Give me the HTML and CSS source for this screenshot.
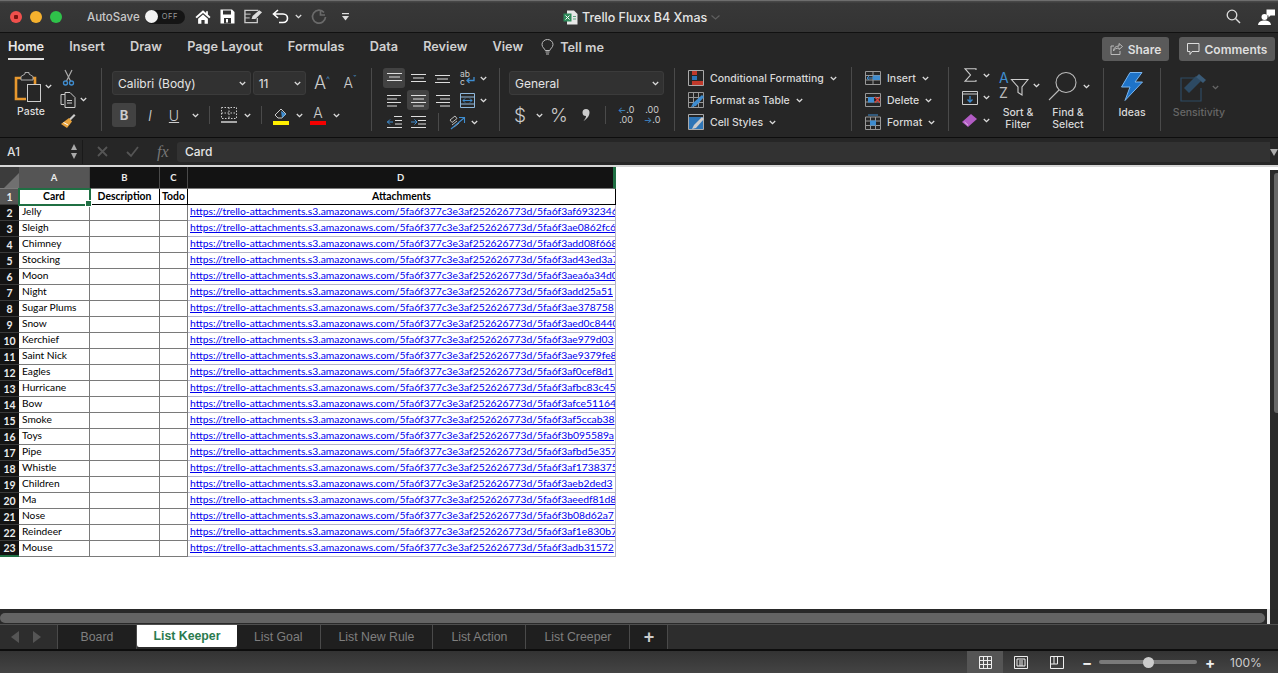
FILE: index.html
```html
<!DOCTYPE html>
<html lang="en">
<head>
    <meta charset="UTF-8">
    <title>Trello Fluxx B4 Xmas</title>
    <link rel="stylesheet" href="styles.css">
</head>
<body>
    <svg class="defs"><symbol id="chev" viewBox="0 0 7 5"><path d="M.8 1l2.7 2.7L6.2 1" fill="none" stroke="currentColor" stroke-width="1.3"/></symbol></svg>

    <header class="titlebar">
        <div class="lights">
            <span class="light red"></span>
            <span class="light yellow"></span>
            <span class="light green"></span>
        </div>
        <span class="autosave">AutoSave</span>
        <span class="toggle"><span class="knob"></span>OFF</span>
        <div class="quick">
            <svg width="16" height="16" viewBox="0 0 18 17"><path d="M9 1 .5 8.5 2 10l7-6 7 6 1.500-1.500-3-2.700V2h-2v2z" fill="#fff"/><path d="M3.500 10.500 9 5.600l5.500 4.900V16h-3.700v-4H7.200v4H3.500z" fill="#fff"/></svg>
            <svg width="15" height="15" viewBox="0 0 15 15"><path d="M.5.500H12L14.500 3v11.500H.5z" fill="#fff"/><rect x="3" y="1.500" width="8" height="4" fill="#333"/><rect x="4" y="9" width="7" height="5.500" fill="#333"/><rect x="6" y="10" width="2" height="3.500" fill="#fff"/></svg>
            <svg width="19" height="15" viewBox="0 0 20 15"><path d="M15 1H1v13h13V9" fill="none" stroke="#ccc" stroke-width="1.400"/><path d="M1 5h6M1 9h5" stroke="#ccc"/><path d="M8 10l1-3 7-6 3 2-7 7z" fill="#ddd"/></svg>
            <svg width="17" height="15" viewBox="0 0 17 15"><path d="M6 1 1.500 5 6 9M2 5h9c6 0 6 8.500 0 8.500H7" fill="none" stroke="#fff" stroke-width="1.600"/></svg>
            <svg class="chev"><use href="#chev"/></svg>
            <svg class="redo" width="16" height="16" viewBox="0 0 16 16"><path d="M13 3.500A6.500 6.500 0 1 0 14.500 8M9.500 1v5H14" fill="none" stroke="#6a6a6a" stroke-width="1.700"/></svg>
            <svg class="more" width="7" height="8" viewBox="0 0 7 8"><rect width="7" height="1.200" fill="#ddd"/><path d="M0 3h7L3.500 7.500z" fill="#ddd"/></svg>
        </div>
        <div class="doc-title">
            <svg width="15" height="15" viewBox="0 0 15 15"><path d="M4 .5h7L14.500 4v10.500H4z" fill="#e8e8e8"/><rect x=".5" y="3.500" width="8" height="8" fill="#2f8a5b"/><path d="M2.500 5.500l4 4M6.500 5.500l-4 4" stroke="#fff"/><path d="M10 6.500h3M10 9h3" stroke="#5aa57f"/></svg>
            <span>Trello Fluxx B4 Xmas</span>
            <svg width="9" height="5" viewBox="0 0 9 5"><path d="M.5.500l4 3.500 4-3.500" fill="none" stroke="#5f5f5f" stroke-width="1.200"/></svg>
        </div>
        <div class="title-right">
            <svg width="15" height="15" viewBox="0 0 15 15"><circle cx="6" cy="6" r="4.800" fill="none" stroke="#ddd" stroke-width="1.300"/><path d="M9.500 9.500 14 14" stroke="#ddd" stroke-width="1.400"/></svg>
            <svg width="19" height="16" viewBox="0 0 18 16"><circle cx="7" cy="8" r="3" fill="#fff"/><path d="M.5 16c.5-3.500 3-4.500 6.500-4.500s6 1 6.500 4.500z" fill="#fff"/><path d="M9 .5h8.500v6H13l-2 2v-2H9z" fill="#fff"/></svg>
        </div>
    </header>

    <nav class="tabs">
        <a class="tab active">Home</a>
        <a class="tab">Insert</a>
        <a class="tab">Draw</a>
        <a class="tab">Page Layout</a>
        <a class="tab">Formulas</a>
        <a class="tab">Data</a>
        <a class="tab">Review</a>
        <a class="tab">View</a>
        <span class="tellme">
            <svg width="13" height="16" viewBox="0 0 13 16"><path d="M4.200 11.500C3.800 9.500 1 8.500 1 5.500a5.500 5 0 0 1 11 0c0 3-2.800 4-3.200 6z" fill="none" stroke="#bbb"/><path d="M4.500 13h4M5 15h3" stroke="#bbb"/></svg>
            Tell me
        </span>
        <div class="tab-buttons">
            <button class="top-btn share">
                <svg width="13" height="12" viewBox="0 0 13 12"><path d="M9 .5l3.500 3L9 6.500V5C6 5 4.500 6 3.500 8c0-3 2-5 5.500-5z" fill="none" stroke="#bbb"/><path d="M4 3H1v8.500h9V8" fill="none" stroke="#bbb"/></svg>
                Share
            </button>
            <button class="top-btn comments">
                <svg width="13" height="12" viewBox="0 0 13 12"><path d="M.5.500H12v8H5l-2 3v-3H.5z" fill="none" stroke="#ddd"/></svg>
                Comments
            </button>
        </div>
    </nav>

    <section class="ribbon">
        <div class="group clipboard">
            <div class="paste">
                <svg width="28" height="30" viewBox="0 0 28 30"><path d="M12 27H2V6h19v6" fill="none" stroke="#e8982e" stroke-width="2.600"/><path d="M7 8V4.500L11 2V.5h4V2l4 2.500V8z" fill="#262626" stroke="#aaa"/><rect x="13.500" y="12.500" width="13" height="17" fill="#262626" stroke="#ccc"/></svg>
                <svg class="chev paste-chev"><use href="#chev"/></svg>
                <span class="paste-label">Paste</span>
            </div>
            <div class="clip-tools">
                <svg class="scissors" width="11" height="16" viewBox="0 0 11 16"><path d="M2 0l5.500 11M9 0 3.500 11" stroke="#aaa" stroke-width="1.200"/><circle cx="2.500" cy="13" r="2" fill="none" stroke="#3f8dd0" stroke-width="1.300"/><circle cx="8.500" cy="13" r="2" fill="none" stroke="#3f8dd0" stroke-width="1.300"/></svg>
                <span class="row-icon">
                    <svg width="16" height="16" viewBox="0 0 16 16"><path d="M5 2.500H1v10h3" fill="none" stroke="#ccc"/><path d="M5 .5h5l5 5v10H5z" fill="#262626" stroke="#ccc"/><path d="M7 8.500h5M7 11h5" stroke="#ccc"/></svg>
                    <svg class="chev"><use href="#chev"/></svg>
                </span>
                <svg width="16" height="16" viewBox="0 0 16 16"><path d="M9 6l5-5 1.500 1.500-5 5z" fill="#ccc"/><path d="M9 5l3 3.500-5 6.500-6-4z" fill="#e8a33d"/><path d="M3.500 9.500 8 12" stroke="#fff"/></svg>
            </div>
        </div>

        <div class="group font">
            <div class="font-row">
                <div class="select font-name">Calibri (Body)<svg class="chev"><use href="#chev"/></svg></div>
                <div class="select font-size">11<svg class="chev"><use href="#chev"/></svg></div>
                <span class="grow-a big">A<sup>^</sup></span>
                <span class="grow-a small">A<sup>ˇ</sup></span>
            </div>
            <div class="font-row tools">
                <span class="fmt bold">B</span>
                <span class="fmt italic">I</span>
                <span class="fmt under">U</span>
                <svg class="chev"><use href="#chev"/></svg>
                <i class="vline"></i>
                <svg width="16" height="16" viewBox="0 0 16 16"><path d="M.5.500h15v11H.5zM8 .5v11M.5 6h15" fill="none" stroke="#ccc" stroke-dasharray="1.500 1.500"/><path d="M0 15h16" stroke="#fff" stroke-width="1.200"/></svg>
                <svg class="chev border-chev"><use href="#chev"/></svg>
                <i class="vline"></i>
                <span class="colour-btn">
                    <svg width="16" height="12" viewBox="0 0 16 12"><path d="M2 7l6-6 5 5-4 4H5z" fill="none" stroke="#ccc"/><path d="M8 3l5 3-4 4z" fill="#3f8dd0"/></svg>
                    <i class="swatch yellow-bar"></i>
                </span>
                <svg class="chev"><use href="#chev"/></svg>
                <span class="colour-btn font-a">
                    A
                    <i class="swatch red-bar"></i>
                </span>
                <svg class="chev"><use href="#chev"/></svg>
            </div>
        </div>

        <div class="group align">
            <div class="align-grid">
                <span class="al on"><svg width="15" height="10" viewBox="0 0 15 10"><path d="M0 .5h15M2 4h11M0 7.500h15" stroke="#ddd"/></svg></span>
                <span class="al"><svg width="15" height="10" viewBox="0 0 15 10"><path d="M0 1.500h15M2 5h11M0 8.500h15" stroke="#ddd"/></svg></span>
                <span class="al"><svg width="15" height="10" viewBox="0 0 15 10"><path d="M0 2.500h15M2 6h11M0 9.500h15" stroke="#ddd"/></svg></span>
                <span class="al wrap-ic"><svg width="15" height="16" viewBox="0 0 15 16"><text x="0" y="7" class="ab">ab</text><text x="0" y="15" class="ab">c</text><path d="M14 7v3.500H7M9.500 8 7 10.500 9.500 13" fill="none" stroke="#3f8dd0" stroke-width="1.300"/></svg><svg class="chev"><use href="#chev"/></svg></span>
                <span class="al"><svg width="15" height="13" viewBox="0 0 15 13"><path d="M0 1.500h14M0 5h10M0 8.500h14M0 12h10" stroke="#ddd"/></svg></span>
                <span class="al on"><svg width="15" height="13" viewBox="0 0 15 13"><path d="M0 1.500h15M2 5h11M0 8.500h15M2 12h11" stroke="#ddd"/></svg></span>
                <span class="al"><svg width="15" height="13" viewBox="0 0 15 13"><path d="M1 1.500h14M5 5h10M1 8.500h14M5 12h10" stroke="#ddd"/></svg></span>
                <span class="al wrap-ic"><svg width="15" height="15" viewBox="0 0 15 15"><path d="M.5.500h14v14H.5zM.5 4h14M.5 11h14" fill="none" stroke="#8fb8dc"/><path d="M3 7.500h9M5 5.500l-2 2 2 2M10 5.500l2 2-2 2" fill="none" stroke="#3f8dd0"/></svg><svg class="chev"><use href="#chev"/></svg></span>
                <span class="al"><svg width="15" height="12" viewBox="0 0 15 12"><path d="M7 .5h8M8 4.500h7M8 8h7M0 11.500h15" stroke="#ddd"/><path d="M6 6H0M3 3.500.5 6 3 8.500" fill="none" stroke="#3f8dd0"/></svg></span>
                <span class="al"><svg width="15" height="12" viewBox="0 0 15 12"><path d="M0 .5h15M7 4.500h8M7 8h8M0 11.500h15" stroke="#ddd"/><path d="M0 6h6M3.500 3.500 6 6 3.500 8.500" fill="none" stroke="#3f8dd0"/></svg></span>
                <span class="al orient">
                    <i class="vline"></i>
                    <svg class="orient-ic" width="16" height="16" viewBox="0 0 16 16"><path d="M1 6l5-4 2 2.500-5 4zM3 11l5-4M5 13l5-4" fill="none" stroke="#ccc" stroke-width=".9"/><path d="M2 15 15 4M10 3.500h5.500V9" fill="none" stroke="#3f8dd0" stroke-width="1.100"/></svg>
                    <svg class="chev"><use href="#chev"/></svg>
                </span>
            </div>
        </div>

        <div class="group number">
            <div class="select general">General<svg class="chev"><use href="#chev"/></svg></div>
            <div class="number-tools">
                <span class="num-sym">$</span>
                <svg class="chev"><use href="#chev"/></svg>
                <span class="num-sym pct">%</span>
                <svg class="comma" width="8" height="12" viewBox="0 0 8 12"><path d="M4 0a3.500 3.500 0 0 1 3.500 3.500C7.500 7 5 10 1.500 12 3.300 10 4 8.500 4 7A3.500 3.500 0 0 1 4 0z" fill="#ccc"/></svg>
                <i class="vline"></i>
                <span class="dec first-dec"><b>←</b>.0<br>.00</span>
                <span class="dec">.00<br><b>→</b>.0</span>
            </div>
        </div>

        <div class="group styles">
            <div class="style-row">
                <svg width="16" height="16" viewBox="0 0 16 16"><path d="M.5.500h15v15H.5z" fill="none" stroke="#aaa"/><rect x="4" y="1" width="5" height="4" fill="#c0392b"/><rect x="4" y="6" width="5" height="4" fill="#2e75b6"/><rect x="4" y="11" width="11" height="4" fill="#c0392b"/></svg>
                Conditional Formatting
                <svg class="chev"><use href="#chev"/></svg>
            </div>
            <div class="style-row">
                <svg width="16" height="16" viewBox="0 0 16 16"><path d="M.5.500h15v15H.5zM.5 5.500h15M.5 10.500h15M5.500.5v15M10.500.5v15" fill="none" stroke="#999"/><path d="M3 15l2-4 9-8 2 2-8 9z" fill="#3f8dd0"/></svg>
                Format as Table
                <svg class="chev"><use href="#chev"/></svg>
            </div>
            <div class="style-row">
                <svg width="16" height="16" viewBox="0 0 16 16"><path d="M.5.500h15v15H.5z" fill="none" stroke="#aaa"/><rect x="1" y="3" width="14" height="12" fill="#2e75b6"/><path d="M4 15l2-4 8-8 2 2-8 9z" fill="#ccc"/></svg>
                Cell Styles
                <svg class="chev"><use href="#chev"/></svg>
            </div>
        </div>

        <div class="group cells">
            <div class="style-row">
                <svg width="16" height="16" viewBox="0 0 16 16"><path d="M.5 1.500h15v13H.5zM.5 5.500h15M.5 10h15M8 1.500v13" fill="none" stroke="#999"/><rect x="8" y="5.500" width="7" height="4.500" fill="#3f8dd0"/><path d="M8 8H2M4 6 2 8l2 2" fill="none" stroke="#3f8dd0"/></svg>
                Insert
                <svg class="chev"><use href="#chev"/></svg>
            </div>
            <div class="style-row">
                <svg width="16" height="16" viewBox="0 0 16 16"><path d="M.5 1.500h15v13H.5zM.5 5.500h15M.5 10h15" fill="none" stroke="#999"/><rect x="3" y="5" width="6" height="5.500" fill="#3f8dd0"/><path d="M10 5l5 5.500M15 5l-5 5.500" stroke="#d9403a" stroke-width="1.300"/></svg>
                Delete
                <svg class="chev"><use href="#chev"/></svg>
            </div>
            <div class="style-row">
                <svg width="16" height="16" viewBox="0 0 16 16"><path d="M.5 3h15v12.500H.5zM.5 7h15M.5 11.500h15M5.500 3v12.500M10.500 3v12.500" fill="none" stroke="#999"/><rect x="5" y="6.500" width="6" height="5" fill="#3f8dd0"/><path d="M3 1h10" stroke="#3f8dd0"/></svg>
                Format
                <svg class="chev"><use href="#chev"/></svg>
            </div>
        </div>

        <div class="group editing">
            <div class="edit-col">
                <span class="row-icon sum"><svg width="13" height="14" viewBox="0 0 13 14"><path d="M12 2V.7H1L6.500 7 1 13.300h11V12" fill="none" stroke="#ccc" stroke-width="1.100"/></svg><svg class="chev"><use href="#chev"/></svg></span>
                <span class="row-icon"><svg width="16" height="14" viewBox="0 0 16 14"><path d="M.5.500h15v13H.5zM.5 3h15" fill="none" stroke="#ccc"/><path d="M8 5v6M5.500 8.500 8 11l2.500-2.500" fill="none" stroke="#3f8dd0" stroke-width="1.300"/></svg><svg class="chev"><use href="#chev"/></svg></span>
                <span class="row-icon"><svg width="16" height="15" viewBox="0 0 16 15"><path d="M0 9 9 1l6 5-9 8z" fill="#b25cc4"/><path d="M2.500 9 6 12.300" stroke="#e6c4ee"/></svg><svg class="chev"><use href="#chev"/></svg></span>
            </div>
            <div class="big-btn sort">
                <span class="row-icon">
                    <svg width="30" height="28" viewBox="0 0 30 28"><text x="0" y="12" class="az blue-t">A</text><text x="0" y="27" class="az">Z</text><path d="M12.500 8.500H29l-6 7.500v8l-4-2.500V16z" fill="none" stroke="#ccc" stroke-width="1.100"/></svg>
                    <svg class="chev"><use href="#chev"/></svg>
                </span>
                <span class="big-label">Sort &amp;<br>Filter</span>
            </div>
            <div class="big-btn find">
                <span class="row-icon">
                    <svg width="30" height="30" viewBox="0 0 30 30"><circle cx="18" cy="11.500" r="10" fill="none" stroke="#bbb" stroke-width="1.100"/><path d="M11 19 1 29" stroke="#bbb" stroke-width="1.100"/></svg>
                    <svg class="chev"><use href="#chev"/></svg>
                </span>
                <span class="big-label">Find &amp;<br>Select</span>
            </div>
        </div>

        <div class="group ideas">
            <svg width="22" height="29" viewBox="0 0 22 29"><path d="M9 .5h12L14 10h7.500L4 28.500 9 15H.5z" fill="#1e73c8" stroke="#7bb6ee"/></svg>
            <span class="big-label">Ideas</span>
        </div>

        <div class="group sensitivity">
            <div class="row-icon">
                <svg width="28" height="30" viewBox="0 0 28 30"><path d="M18 6H1v23h20V16" fill="none" stroke="#2d4a63" stroke-width="1.200"/><path d="M4 16 16 4l5 5L9 21z" fill="#2d4a63"/><path d="M19 2l7 6-3 3-7-6z" fill="#3a5a76"/></svg>
                <svg class="chev dim-chev"><use href="#chev"/></svg>
            </div>
            <span class="big-label dim">Sensitivity</span>
        </div>
    </section>

    <div class="formula-bar">
        <div class="name-box">
            <span>A1</span>
            <span class="spin"><i class="up"></i><i class="down"></i></span>
        </div>
        <div class="fx-tools">
            <svg width="11" height="11" viewBox="0 0 11 11"><path d="M1 1l9 9M10 1l-9 9" stroke="#555" stroke-width="1.800"/></svg>
            <svg width="13" height="11" viewBox="0 0 13 11"><path d="M1 6l4 4 7-9" fill="none" stroke="#555" stroke-width="1.800"/></svg>
            <span class="fx">fx</span>
        </div>
        <div class="formula-input">Card</div>
        <i class="bar-caret"></i>
    </div>

    <main class="sheet-wrap">
        <div class="sheet-area">
            <table class="sheet">
                <colgroup>
                    <col class="c-head"><col class="c-a"><col class="c-b"><col class="c-c"><col class="c-d">
                </colgroup>
                <thead>
                    <tr>
                        <th class="corner"><i></i></th>
                        <th class="col sel">A</th>
                        <th class="col">B</th>
                        <th class="col">C</th>
                        <th class="col last">D</th>
                    </tr>
                </thead>
                <tbody>
                    <tr><th class="rn sel">1</th><td class="hd active-cell">Card<i class="handle"></i></td><td class="hd">Description</td><td class="hd">Todo</td><td class="hd">Attachments</td></tr>
                    <tr><th class="rn">2</th><td>Jelly</td><td></td><td></td><td class="link"><a>https://trello-attachments.s3.amazonaws.com/5fa6f377c3e3af252626773d/5fa6f3af6932346</a></td></tr>
                    <tr><th class="rn">3</th><td>Sleigh</td><td></td><td></td><td class="link"><a>https://trello-attachments.s3.amazonaws.com/5fa6f377c3e3af252626773d/5fa6f3ae0862fc6</a></td></tr>
                    <tr><th class="rn">4</th><td>Chimney</td><td></td><td></td><td class="link"><a>https://trello-attachments.s3.amazonaws.com/5fa6f377c3e3af252626773d/5fa6f3add08f668</a></td></tr>
                    <tr><th class="rn">5</th><td>Stocking</td><td></td><td></td><td class="link"><a>https://trello-attachments.s3.amazonaws.com/5fa6f377c3e3af252626773d/5fa6f3ad43ed3a7</a></td></tr>
                    <tr><th class="rn">6</th><td>Moon</td><td></td><td></td><td class="link"><a>https://trello-attachments.s3.amazonaws.com/5fa6f377c3e3af252626773d/5fa6f3aea6a34d0</a></td></tr>
                    <tr><th class="rn">7</th><td>Night</td><td></td><td></td><td class="link"><a>https://trello-attachments.s3.amazonaws.com/5fa6f377c3e3af252626773d/5fa6f3add25a51</a></td></tr>
                    <tr><th class="rn">8</th><td>Sugar Plums</td><td></td><td></td><td class="link"><a>https://trello-attachments.s3.amazonaws.com/5fa6f377c3e3af252626773d/5fa6f3ae378758</a></td></tr>
                    <tr><th class="rn">9</th><td>Snow</td><td></td><td></td><td class="link"><a>https://trello-attachments.s3.amazonaws.com/5fa6f377c3e3af252626773d/5fa6f3aed0c8440</a></td></tr>
                    <tr><th class="rn">10</th><td>Kerchief</td><td></td><td></td><td class="link"><a>https://trello-attachments.s3.amazonaws.com/5fa6f377c3e3af252626773d/5fa6f3ae979d03</a></td></tr>
                    <tr><th class="rn">11</th><td>Saint Nick</td><td></td><td></td><td class="link"><a>https://trello-attachments.s3.amazonaws.com/5fa6f377c3e3af252626773d/5fa6f3ae9379fe8</a></td></tr>
                    <tr><th class="rn">12</th><td>Eagles</td><td></td><td></td><td class="link"><a>https://trello-attachments.s3.amazonaws.com/5fa6f377c3e3af252626773d/5fa6f3af0cef8d1</a></td></tr>
                    <tr><th class="rn">13</th><td>Hurricane</td><td></td><td></td><td class="link"><a>https://trello-attachments.s3.amazonaws.com/5fa6f377c3e3af252626773d/5fa6f3afbc83c45</a></td></tr>
                    <tr><th class="rn">14</th><td>Bow</td><td></td><td></td><td class="link"><a>https://trello-attachments.s3.amazonaws.com/5fa6f377c3e3af252626773d/5fa6f3afce51164</a></td></tr>
                    <tr><th class="rn">15</th><td>Smoke</td><td></td><td></td><td class="link"><a>https://trello-attachments.s3.amazonaws.com/5fa6f377c3e3af252626773d/5fa6f3af5ccab38</a></td></tr>
                    <tr><th class="rn">16</th><td>Toys</td><td></td><td></td><td class="link"><a>https://trello-attachments.s3.amazonaws.com/5fa6f377c3e3af252626773d/5fa6f3b095589a</a></td></tr>
                    <tr><th class="rn">17</th><td>Pipe</td><td></td><td></td><td class="link"><a>https://trello-attachments.s3.amazonaws.com/5fa6f377c3e3af252626773d/5fa6f3afbd5e357</a></td></tr>
                    <tr><th class="rn">18</th><td>Whistle</td><td></td><td></td><td class="link"><a>https://trello-attachments.s3.amazonaws.com/5fa6f377c3e3af252626773d/5fa6f3af1738375</a></td></tr>
                    <tr><th class="rn">19</th><td>Children</td><td></td><td></td><td class="link"><a>https://trello-attachments.s3.amazonaws.com/5fa6f377c3e3af252626773d/5fa6f3aeb2ded3</a></td></tr>
                    <tr><th class="rn">20</th><td>Ma</td><td></td><td></td><td class="link"><a>https://trello-attachments.s3.amazonaws.com/5fa6f377c3e3af252626773d/5fa6f3aeedf81d8</a></td></tr>
                    <tr><th class="rn">21</th><td>Nose</td><td></td><td></td><td class="link"><a>https://trello-attachments.s3.amazonaws.com/5fa6f377c3e3af252626773d/5fa6f3b08d62a7</a></td></tr>
                    <tr><th class="rn">22</th><td>Reindeer</td><td></td><td></td><td class="link"><a>https://trello-attachments.s3.amazonaws.com/5fa6f377c3e3af252626773d/5fa6f3af1e830b7</a></td></tr>
                    <tr><th class="rn lastrow">23</th><td>Mouse</td><td></td><td></td><td class="link"><a>https://trello-attachments.s3.amazonaws.com/5fa6f377c3e3af252626773d/5fa6f3adb31572</a></td></tr>
                </tbody>
            </table>
        </div>
        <div class="vscroll"><i></i></div>
    </main>

    <div class="hscroll"><i></i></div>

    <div class="sheet-tabs">
        <div class="tab-arrows"><i class="left"></i><i class="right"></i></div>
        <span class="stab board">Board</span>
        <span class="stab current">List Keeper</span>
        <span class="stab goal">List Goal</span>
        <span class="stab">List New Rule</span>
        <span class="stab">List Action</span>
        <span class="stab">List Creeper</span>
        <span class="stab plus">+</span>
    </div>

    <footer class="statusbar">
        <span class="view on"><svg width="13" height="13" viewBox="0 0 13 13"><path d="M.5.500h12v12H.5zM.5 4.500h12M.5 8.500h12M4.500.5v12M8.500.5v12" fill="none" stroke="#eee"/></svg></span>
        <span class="view"><svg width="14" height="13" viewBox="0 0 14 13"><path d="M.5.500h13v12H.5z" fill="none" stroke="#eee"/><path d="M3 3h8v7H3zM5 5h4M5 7h4M5 9h4" fill="none" stroke="#eee"/></svg></span>
        <span class="view"><svg width="14" height="13" viewBox="0 0 14 13"><path d="M.5.500h13v12H.5zM.5 8h7V.5M4 .5V8" fill="none" stroke="#eee"/></svg></span>
        <span class="zoom-btn minus">−</span>
        <span class="slider"><i></i></span>
        <span class="zoom-btn">+</span>
        <span class="pct-label">100%</span>
    </footer>
</body>
</html>
```

FILE: styles.css
```css
* {
    box-sizing: border-box;
}

body {
    margin: 0;
    width: 1278px;
    height: 673px;
    overflow: hidden;
    background-color: #262626;
    color: #e0e0e0;
    font-family: 'Inter', 'Roboto', sans-serif;
    font-size: 11px;
    display: flex;
    flex-direction: column;
}

svg {
    display: block;
    flex: none;
    overflow: visible;
}

i {
    font-style: normal;
}

.defs {
    display: none;
}

.chev {
    width: 7px;
    height: 5px;
    color: #ddd;
}

.vline {
    display: block;
    width: 1px;
    height: 18px;
    background-color: #4a4a4a;
    flex: none;
}

.row-icon {
    display: flex;
    align-items: center;
    gap: 4px;
}

/* title bar */
.titlebar {
    height: 33px;
    flex: none;
    display: flex;
    align-items: center;
    background: linear-gradient(#4b4b4b, #383838 8%, #333333);
    border-top: 1px solid #6d6d6d;
    border-bottom: 1px solid #111;
    padding: 0 2px 0 10px;
    position: relative;
}

.lights {
    display: flex;
    gap: 8px;
    width: 77px;
}

.light {
    width: 12px;
    height: 12px;
    border-radius: 50%;
}

.light.red {
    background: radial-gradient(circle, #7a1410 0 2px, #f0504c 2.5px);
}

.light.yellow {
    background-color: #f5b12e;
}

.light.green {
    background-color: #2fc24a;
}

.autosave {
    color: #c8c8c8;
    font-size: 11.5px;
    font-weight: 500;
}

.toggle {
    display: flex;
    align-items: center;
    gap: 4px;
    width: 40px;
    height: 14px;
    margin-left: 5px;
    border-radius: 7px;
    background-color: #151515;
    color: #999;
    font-size: 7.5px;
    letter-spacing: 0.5px;
}

.knob {
    width: 13px;
    height: 13px;
    border-radius: 50%;
    background-color: #f2f2f2;
}

.quick {
    display: flex;
    align-items: center;
    margin-left: 10px;
    gap: 9px;
}

.quick .chev {
    margin-left: -3px;
}

.quick .redo {
    margin-left: 0;
}

.quick .more {
    margin-left: 6px;
}

.doc-title {
    position: absolute;
    left: 563px;
    top: 9px;
    display: flex;
    align-items: center;
    gap: 4px;
    color: #e4e4e4;
    font-size: 12.5px;
    font-weight: 500;
}

.title-right {
    margin-left: auto;
    display: flex;
    align-items: center;
    gap: 16px;
}

/* ribbon tabs */
.tabs {
    height: 31px;
    flex: none;
    display: flex;
    align-items: flex-start;
    padding: 4px 0 0 8px;
    background-color: #262626;
}

.tab {
    color: #d0d0d0;
    font-size: 12.7px;
    font-weight: 600;
    height: 23px;
    padding-top: 2px;
    margin-right: 25.2px;
}

.tab.active {
    color: #e8e8e8;
    border-bottom: 2px solid #e0e0e0;
}

.tellme {
    display: flex;
    align-items: center;
    gap: 6px;
    height: 20px;
    margin-left: -7px;
    color: #cfcfcf;
    font-size: 12.7px;
    font-weight: 600;
}

.tab-buttons {
    margin-left: auto;
    display: flex;
    gap: 10px;
    margin-right: 3px;
}

.top-btn {
    display: flex;
    align-items: center;
    justify-content: center;
    gap: 5px;
    height: 24px;
    border: none;
    border-radius: 3px;
    background-color: #5a5a5a;
    color: #dedede;
    font-family: inherit;
    font-size: 12px;
    font-weight: 600;
    padding: 0;
}

.top-btn.share {
    width: 67px;
}

.top-btn.comments {
    width: 96px;
}

/* ribbon */
.ribbon {
    height: 74px;
    flex: none;
    display: flex;
    align-items: stretch;
    padding-top: 4px;
    padding-bottom: 6px;
    background-color: #262626;
    border-bottom: 1px solid #0d0d0d;
}

.group {
    border-right: 1px solid #4a4a4a;
    flex: none;
    color: #d8d8d8;
}

.clipboard {
    width: 102px;
    padding-left: 14px;
    display: flex;
    gap: 4px;
}

.paste {
    width: 42px;
    display: grid;
    grid-template-columns: 31px auto;
    grid-template-rows: 37px auto;
    align-content: start;
    align-items: center;
}

.paste-chev {
    margin-top: 0;
}

.paste-label {
    grid-column: 1 / 3;
    font-size: 10.5px;
    font-weight: 500;
    line-height: 13px;
    color: #ddd;
    padding-left: 3px;
}

.clip-tools {
    display: flex;
    flex-direction: column;
    justify-content: space-between;
    padding-bottom: 2px;
    align-items: flex-start;
}

.scissors {
    margin: 2px 0 0 3px;
}

.font {
    width: 270px;
    padding: 3px 0 0 10px;
    display: flex;
    flex-direction: column;
    gap: 8px;
}

.font-row {
    display: flex;
    align-items: center;
    gap: 2px;
}

.select {
    display: flex;
    align-items: center;
    justify-content: space-between;
    height: 24px;
    background-color: #313131;
    border: 1px solid #3b3b3b;
    border-radius: 3px;
    padding: 0 4px 0 5px;
    color: #e4e4e4;
    font-size: 12px;
}

.font-name {
    width: 141px;
}

.font-size {
    width: 54px;
}

.grow-a {
    color: #ccc;
    font-weight: 300;
    line-height: 1;
    display: block;
    width: 31px;
}

.grow-a.big {
    font-size: 18px;
    padding-left: 6px;
}

.grow-a.small {
    font-size: 14px;
    padding-left: 3px;
}

.grow-a sup {
    color: #4a98db;
    font-size: 9px;
    vertical-align: 6px;
    line-height: 0;
}

.font-row.tools {
    height: 24px;
    gap: 0;
}

.fmt {
    width: 24px;
    height: 24px;
    display: flex;
    align-items: center;
    justify-content: center;
    border-radius: 3px;
    color: #ccc;
    font-size: 13px;
}

.fmt.bold {
    background-color: #424242;
    font-weight: 700;
}

.fmt.italic {
    font-style: italic;
    font-weight: 300;
    font-size: 15px;
    margin-left: 2px;
}

.fmt.under {
    text-decoration: underline;
    font-weight: 300;
    font-size: 14px;
    margin-right: 5px;
}

.tools .chev {
    margin-left: 1px;
}

.tools .border-chev {
    margin-left: 7px;
}

.tools .vline {
    margin: 0 11px 0 10px;
}

.colour-btn {
    width: 16px;
    height: 20px;
    display: flex;
    flex-direction: column;
    justify-content: flex-end;
    align-items: center;
    margin-right: 6px;
    gap: 1px;
}

.font-a {
    color: #ccc;
    font-size: 14px;
    font-weight: 300;
    line-height: 14px;
    margin-left: 7px;
}

.swatch {
    display: block;
    width: 16px;
    height: 4px;
    flex: none;
}

.yellow-bar {
    background-color: #ffef00;
}

.red-bar {
    background-color: #f50000;
}

.align {
    width: 128px;
    padding-left: 10px;
}

.align-grid {
    display: grid;
    grid-template-columns: 24px 24px 24px auto;
    grid-auto-rows: 22px;
    align-items: center;
    justify-items: center;
    margin-top: -1px;
}

.al {
    width: 22px;
    height: 20px;
    display: flex;
    align-items: center;
    justify-content: center;
    border-radius: 3px;
}

.al.on {
    background-color: #424242;
}

.wrap-ic {
    width: auto;
    gap: 5px;
    margin-left: 6px;
    justify-self: start;
}

.orient {
    grid-column: 3 / 5;
    width: auto;
    justify-self: start;
    padding-left: 8px;
    gap: 6px;
}

.orient-ic {
    margin-left: 4px;
}

.ab {
    font-size: 8.5px;
    fill: #ccc;
}

.number {
    width: 175px;
    padding-left: 9px;
}

.general {
    width: 155px;
    margin-top: 3px;
}

.number-tools {
    display: flex;
    align-items: center;
    margin-top: 8px;
    height: 24px;
    color: #ccc;
}

.num-sym {
    font-size: 19px;
    font-weight: 300;
    width: 22px;
    text-align: center;
}

.number-tools .chev {
    margin-left: 5px;
}

.pct {
    margin-left: 4px;
    width: 24px;
}

.comma {
    margin-left: 11px;
}

.number-tools .vline {
    margin-left: 15px;
}

.dec {
    font-size: 9px;
    line-height: 10px;
    width: 26px;
    text-align: center;
}

.first-dec {
    margin-left: 7px;
}

.dec b {
    color: #3f8dd0;
    font-weight: 400;
}

.styles {
    width: 177px;
    padding-left: 13px;
    margin-top: -1px;
}

.style-row {
    display: flex;
    align-items: center;
    height: 22px;
    gap: 6px;
    font-size: 10.5px;
    font-weight: 500;
    color: #d8d8d8;
    white-space: nowrap;
}

.cells {
    width: 97px;
    padding-left: 13px;
    margin-top: -1px;
}

.editing {
    width: 155px;
    padding-left: 13px;
    display: flex;
}

.edit-col {
    display: flex;
    flex-direction: column;
    justify-content: space-between;
    padding-bottom: 3px;
    gap: 4px;
    width: 31px;
    flex: none;
}

.edit-col .row-icon {
    gap: 5px;
}

.edit-col .sum {
    gap: 6px;
    padding-left: 2px;
}

.big-btn {
    width: 50px;
    display: flex;
    flex-direction: column;
    align-items: center;
    justify-content: space-between;
}

.big-btn .row-icon {
    align-self: flex-start;
    margin-top: 3px;
}

.sort .row-icon {
    margin-left: 6px;
}

.find .row-icon {
    margin-left: 5px;
    gap: 5px;
}

.big-label {
    font-size: 10.5px;
    font-weight: 500;
    line-height: 12px;
    text-align: center;
    color: #d8d8d8;
    white-space: nowrap;
}

.big-label.dim {
    color: #666;
}

.az {
    font-size: 14px;
    fill: #bbb;
}

.blue-t {
    fill: #3f8dd0;
}

.ideas {
    width: 57px;
    padding-top: 4px;
    display: flex;
    flex-direction: column;
    align-items: center;
    gap: 6px;
}

.sensitivity {
    border-right: none;
    width: 76px;
    padding-top: 4px;
    display: flex;
    flex-direction: column;
    align-items: center;
    gap: 5px;
}

.dim-chev {
    color: #666;
}

/* formula bar */
.formula-bar {
    height: 27px;
    flex: none;
    display: flex;
    align-items: center;
    background-color: #262626;
    position: relative;
}

.name-box {
    width: 83px;
    height: 24px;
    display: flex;
    align-items: center;
    justify-content: space-between;
    padding: 0 5px 0 7px;
    color: #ddd;
    font-size: 12px;
    font-weight: 500;
    border-right: 1px solid #1a1a1a;
}

.spin {
    display: flex;
    flex-direction: column;
    gap: 3px;
}

.spin i {
    display: block;
    width: 0;
    height: 0;
    border-left: 3.5px solid transparent;
    border-right: 3.5px solid transparent;
}

.spin .up {
    border-bottom: 6px solid #aaa;
}

.spin .down {
    border-top: 6px solid #aaa;
}

.fx-tools {
    width: 94px;
    display: flex;
    align-items: center;
    gap: 18px;
    padding-left: 14px;
}

.fx {
    color: #777;
    font-family: 'Liberation Serif', serif;
    font-style: italic;
    font-size: 16px;
}

.formula-input {
    flex: 1;
    height: 20px;
    line-height: 20px;
    margin-right: 8px;
    padding-left: 8px;
    background-color: #323232;
    border-radius: 3px 0 0 3px;
    color: #e6e6e6;
    font-size: 12px;
    font-weight: 500;
}

.bar-caret {
    position: absolute;
    right: 0;
    top: 11px;
    border-left: 4px solid transparent;
    border-right: 4px solid transparent;
    border-top: 7px solid #aaa;
}

/* sheet */
.sheet-wrap {
    height: 444px;
    flex: none;
    display: flex;
    background-color: #fff;
    border-top: 2px solid #d6d6d6;
}

.sheet-area {
    flex: 1;
    overflow: hidden;
}

.sheet {
    border-collapse: separate;
    border-spacing: 0;
    table-layout: fixed;
    width: 616px;
    font-family: 'Lato', 'Open Sans', sans-serif;
    font-size: 10.2px;
    color: #000;
}

.c-head {
    width: 19px;
}

.c-a {
    width: 71px;
}

.c-b {
    width: 70px;
}

.c-c {
    width: 28px;
}

.c-d {
    width: 428px;
}

.sheet tr {
    height: 16px;
}

.sheet thead tr {
    height: 22px;
}

.sheet td {
    padding: 0 0 2px 3px;
    border-right: 1px solid #7a7a7a;
    border-bottom: 1px solid #7a7a7a;
    white-space: nowrap;
    overflow: hidden;
    position: relative;
    line-height: 13px;
}

.corner {
    background-color: #3c3c3c;
    padding: 0;
    position: relative;
    border-bottom: 1px solid #7a7a7a;
}

.corner i {
    position: absolute;
    right: 0;
    bottom: 0;
    width: 0;
    height: 0;
    border-left: 15px solid transparent;
    border-bottom: 15px solid #707070;
}

.col {
    background-color: #131313;
    color: #ececec;
    font-size: 9.5px;
    font-weight: 700;
    border-right: 1px solid #4a4a4a;
    border-bottom: 1px solid #7a7a7a;
    padding: 0;
}

.col.sel {
    background-color: #555;
}

.col.last {
    border-right: 3px solid #1f6f43;
}

.rn {
    background-color: #131313;
    color: #ececec;
    font-size: 10.5px;
    font-weight: 700;
    padding: 0;
    border-bottom: 1px solid #3a3a3a;
}

.rn.sel {
    background-color: #555;
}

.rn.lastrow {
    border-bottom: 2px solid #1f6f43;
}

.sheet td.hd {
    text-align: center;
    font-size: 10.4px;
    font-weight: 700;
    color: #000;
    padding-left: 0;
    padding-bottom: 0;
    border-bottom: 1px solid #000;
    border-right-color: #000;
}

.sheet td.active-cell {
    overflow: visible;
    outline: 2px solid #1f6f43;
    outline-offset: -1px;
    z-index: 1;
}

.handle {
    position: absolute;
    right: -3px;
    bottom: -3px;
    width: 5px;
    height: 5px;
    background-color: #1f6f43;
    border: 1px solid #fff;
    box-sizing: content-box;
}

.sheet td.link {
    padding-left: 2px;
    border-right: 1px solid #b5b5c8;
    border-bottom: 1px solid #b5b5c8;
    font-size: 10.32px;
}

.link a {
    color: #0000ee;
    text-decoration: underline;
}

.vscroll {
    width: 8px;
    flex: none;
    padding: 6px 0 0 4px;
    background: linear-gradient(#fff 3px, #2a2a2a 3px);
}

.vscroll i {
    display: block;
    height: 240px;
    background-color: #666;
    border-radius: 3px 0 0 3px;
}

.hscroll {
    height: 16px;
    flex: none;
    background: linear-gradient(to right, #292929 1267px, #e8e8e8 1267px, #e8e8e8 1270px, #292929 1270px);
    padding: 4px 13px 0 0;
    border-bottom: 1px solid #4e4e4e;
}

.hscroll i {
    display: block;
    height: 10px;
    background-color: #646464;
    border-radius: 5px;
}

/* sheet tabs */
.sheet-tabs {
    height: 26px;
    flex: none;
    display: flex;
    background-color: #2d2d2d;
    border-bottom: 2px solid #0d0d0d;
}

.tab-arrows {
    width: 58px;
    display: flex;
    align-items: center;
    gap: 14px;
    padding-left: 11px;
    border-right: 1px solid #4a4a4a;
}

.tab-arrows i {
    display: block;
    border-top: 6px solid transparent;
    border-bottom: 6px solid transparent;
}

.tab-arrows .left {
    border-right: 8px solid #555;
}

.tab-arrows .right {
    border-left: 8px solid #555;
}

.stab {
    display: flex;
    align-items: center;
    justify-content: center;
    padding: 0 18px;
    height: 24px;
    background-color: #1f1f1f;
    border-right: 1px solid #4a4a4a;
    color: #7f7f7f;
    font-size: 12.3px;
    font-family: 'Liberation Sans', sans-serif;
}

.stab.board {
    width: 79px;
    padding: 0;
}

.stab.goal {
    padding: 0 17px;
}

.stab.current {
    background-color: #fff;
    color: #2a7a4e;
    font-weight: 700;
    border-right: none;
    border-radius: 0 0 2px 2px;
    padding: 0 16.5px;
    height: 22px;
}

.stab.plus {
    padding: 0;
    width: 38px;
    color: #ccc;
    font-size: 18px;
    font-weight: 700;
}

/* status bar */
.statusbar {
    flex: 1;
    display: flex;
    align-items: center;
    justify-content: flex-end;
    background: linear-gradient(#333, #444);
    padding-right: 16px;
    color: #ccc;
}

.view {
    width: 36px;
    height: 22px;
    display: flex;
    align-items: center;
    justify-content: center;
}

.view.on {
    background-color: #555;
}

.zoom-btn {
    width: 16px;
    text-align: center;
    color: #f0f0f0;
    font-size: 15px;
    font-weight: 700;
    margin-left: 10px;
}

.zoom-btn.minus {
    margin-left: 4px;
}

.slider {
    margin-left: 4px;
    margin-right: -5px;
    width: 98px;
    height: 4px;
    background-color: #7a7a7a;
    border-radius: 2px;
    position: relative;
}

.slider i {
    position: absolute;
    left: 44px;
    top: -3.5px;
    width: 11px;
    height: 11px;
    border-radius: 50%;
    background-color: #ccc;
}

.pct-label {
    margin-left: 12px;
    font-size: 12px;
    width: 32px;
}
```
